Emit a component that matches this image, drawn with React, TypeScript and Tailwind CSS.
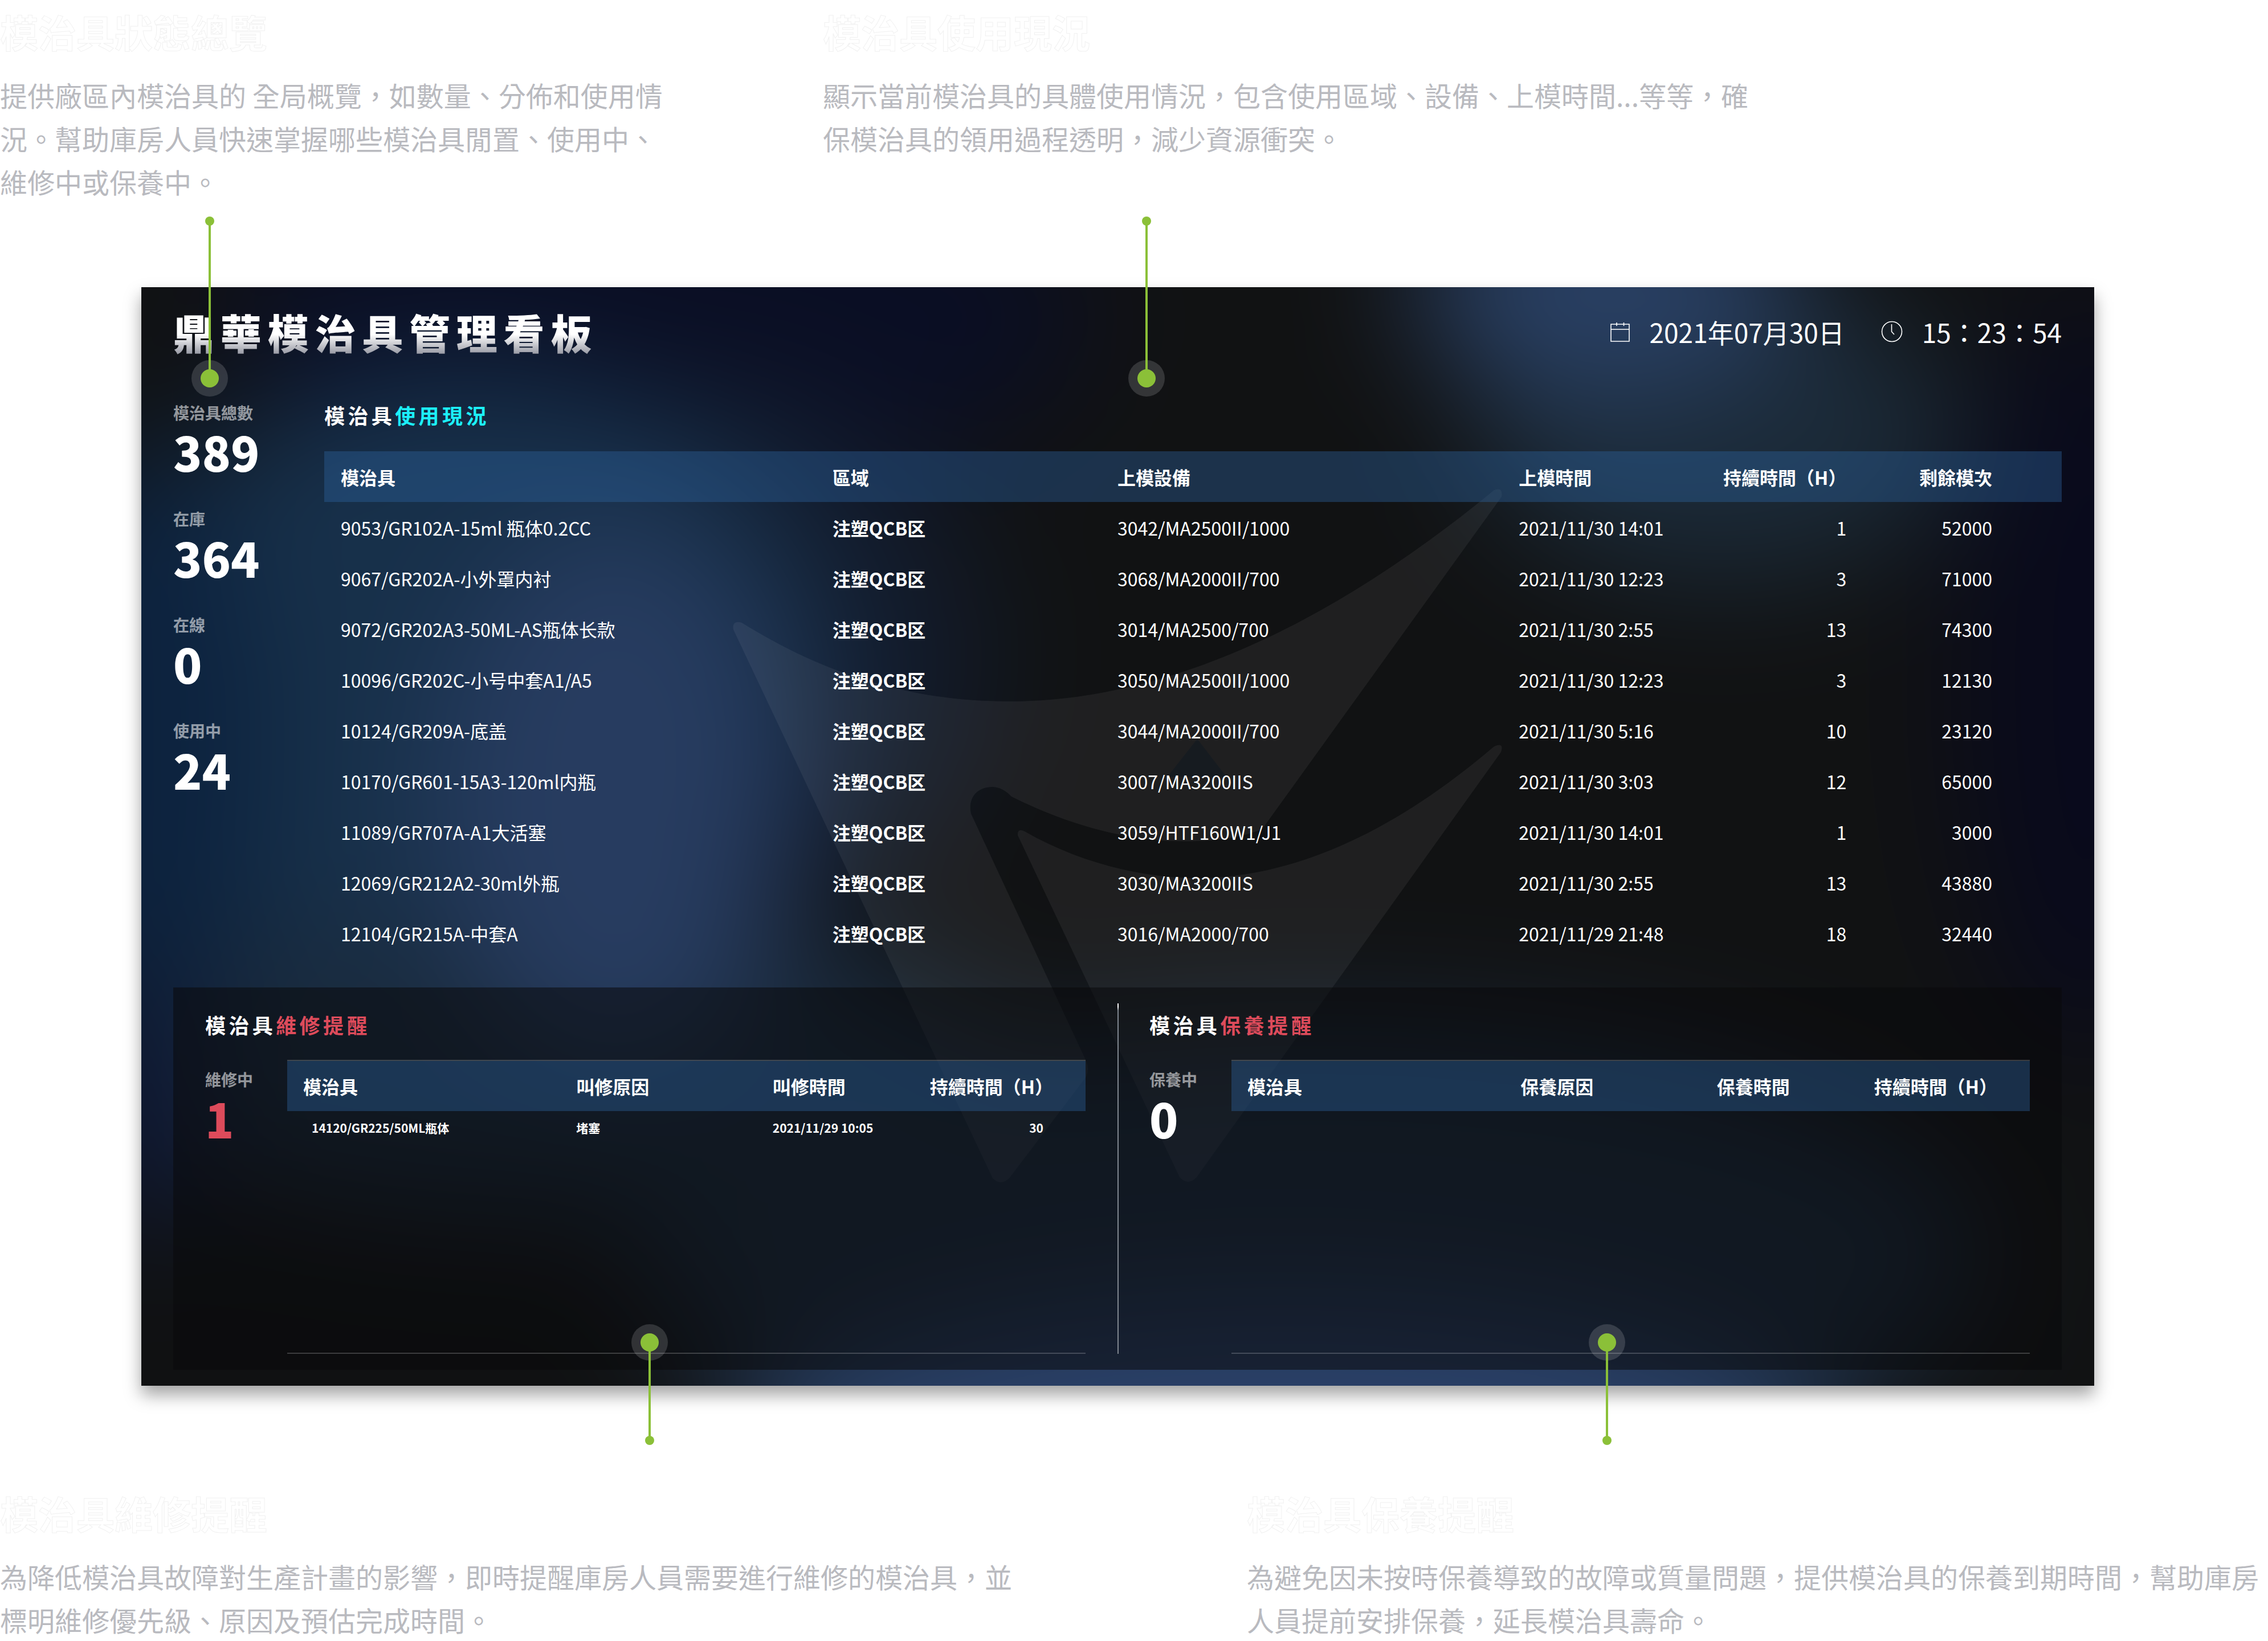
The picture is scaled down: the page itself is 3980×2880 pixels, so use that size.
import type { ReactNode } from "react";

const molds = [
  ["9053/GR102A-15ml 瓶体0.2CC", "3042/MA2500II/1000", "2021/11/30 14:01", "1", "52000"],
  ["9067/GR202A-小外罩内衬", "3068/MA2000II/700", "2021/11/30 12:23", "3", "71000"],
  ["9072/GR202A3-50ML-AS瓶体长款", "3014/MA2500/700", "2021/11/30 2:55", "13", "74300"],
  ["10096/GR202C-小号中套A1/A5", "3050/MA2500II/1000", "2021/11/30 12:23", "3", "12130"],
  ["10124/GR209A-底盖", "3044/MA2000II/700", "2021/11/30 5:16", "10", "23120"],
  ["10170/GR601-15A3-120ml内瓶", "3007/MA3200IIS", "2021/11/30 3:03", "12", "65000"],
  ["11089/GR707A-A1大活塞", "3059/HTF160W1/J1", "2021/11/30 14:01", "1", "3000"],
  ["12069/GR212A2-30ml外瓶", "3030/MA3200IIS", "2021/11/30 2:55", "13", "43880"],
  ["12104/GR215A-中套A", "3016/MA2000/700", "2021/11/29 21:48", "18", "32440"],
];

const repairs = [["14120/GR225/50ML瓶体", "堵塞", "2021/11/29 10:05", "30"]];

const stats = [
  { name: "模治具總數", value: "389" },
  { name: "在庫", value: "364" },
  { name: "在線", value: "0" },
  { name: "使用中", value: "24" },
];

const sectionTitle = "text-[36px] leading-[48px] font-bold tracking-[0.15em] text-white";
const headRow = "bg-[#2c649f]/40 text-left text-[32px] text-white";

function Caption({ title, className, children }: { title: string; className: string; children: ReactNode }) {
  return (
    <div>
      <h2 className="text-[67px] leading-[110px] font-bold text-white [-webkit-text-stroke:1px_#f1f1f1]">
        {title}
      </h2>
      <p className={`mt-[18px] text-[48px] leading-[76px] text-[#b9babf] ${className}`}>{children}</p>
    </div>
  );
}

function Stat({ name, value, alert }: { name: string; value: string; alert?: boolean }) {
  return (
    <dl>
      <dt className="text-[28px] leading-[40px] font-bold text-white/55">{name}</dt>
      <dd className={`text-[83px] leading-[96px] font-black ${alert ? "text-[#dd4b5b]" : "text-white"}`}>
        {value}
      </dd>
    </dl>
  );
}

function PinDown({ className }: { className: string }) {
  return (
    <svg aria-hidden="true" viewBox="0 0 64 316" className={`absolute -top-[124px] h-[316px] w-16 ${className}`}>
      <circle cx="32" cy="284" r="32" fill="#fff" fillOpacity="0.15" />
      <path d="M32 8V284" stroke="#8bc038" strokeWidth="4" />
      <circle cx="32" cy="8" r="8" fill="#8bc038" />
      <circle cx="32" cy="284" r="16" fill="#8bc038" />
    </svg>
  );
}

function PinUp({ className }: { className: string }) {
  return (
    <svg aria-hidden="true" viewBox="0 0 64 212" className={`absolute -bottom-[104px] h-[212px] w-16 ${className}`}>
      <circle cx="32" cy="32" r="32" fill="#fff" fillOpacity="0.15" />
      <path d="M32 32V204" stroke="#8bc038" strokeWidth="4" />
      <circle cx="32" cy="204" r="8" fill="#8bc038" />
      <circle cx="32" cy="32" r="16" fill="#8bc038" />
    </svg>
  );
}

// Soft colour fields with the brand mark over them
function Backdrop() {
  return (
    <svg
      aria-hidden="true"
      viewBox="248 504 3427 1928"
      preserveAspectRatio="none"
      className="absolute inset-0 size-full overflow-hidden"
    >
      <defs>
        <filter
          id="soft"
          filterUnits="userSpaceOnUse"
          x="-400"
          y="-100"
          width="4700"
          height="3200"
          colorInterpolationFilters="sRGB"
        >
          <feGaussianBlur stdDeviation="110" />
        </filter>
      </defs>
      <g filter="url(#soft)">
        <rect x="-400" y="-100" width="4700" height="3200" fill="#111213" />
        <ellipse cx="1150" cy="560" rx="760" ry="300" fill="#0a0e24" />
        <ellipse cx="1250" cy="1150" rx="480" ry="480" fill="#121b2c" />
        <ellipse cx="820" cy="1200" rx="640" ry="560" fill="#17304a" />
        <ellipse cx="960" cy="1880" rx="800" ry="260" fill="#1a2b3e" />
        <ellipse cx="240" cy="1300" rx="210" ry="520" fill="#0c223e" />
        <ellipse cx="1080" cy="1400" rx="310" ry="480" fill="#273c60" />
        <ellipse cx="240" cy="1950" rx="120" ry="220" fill="#0d1634" />
        <ellipse cx="3020" cy="760" rx="430" ry="260" fill="#1b2a38" />
        <ellipse cx="2820" cy="500" rx="340" ry="200" fill="#294064" />
        <ellipse cx="3660" cy="1180" rx="220" ry="680" fill="#090a1c" />
        <ellipse cx="2300" cy="2200" rx="1180" ry="400" fill="#1b2b3e" />
        <ellipse cx="2250" cy="2600" rx="980" ry="330" fill="#2a4068" />
        <ellipse cx="600" cy="2460" rx="560" ry="320" fill="#101112" />
      </g>
      <g fill="#fff" fillOpacity="0.06">
        <path d="M1302 1093C1450 1185 1600 1231 1771 1231C2080 1231 2380 1060 2622 860Q2638 854 2635 872L2215 1455C2170 1474 2110 1478 2052 1476C1950 1470 1860 1440 1775 1398Q1760 1382 1742 1381C1715 1381 1698 1400 1704 1428L1906 1862Q1912 1876 1906 1890L1771 2068Q1756 2082 1742 2068L1287 1105Q1284 1088 1302 1093Z" />
        <path d="M1798 1459C1890 1512 2000 1541 2100 1541C2290 1541 2470 1440 2622 1310Q2640 1302 2634 1320L2100 2066Q2085 2082 2070 2066L1786 1466Q1785 1453 1798 1459Z" />
      </g>
      <path d="M2101 1297L2049 1363H2152Z" fill="#161b20" />
    </svg>
  );
}

type ReminderProps = {
  accent: string;
  stat: ReactNode;
  columns: string[];
  rows: string[][];
};

function Reminder({ accent, stat, columns, rows }: ReminderProps) {
  return (
    <section className="flex flex-col px-[56px] pt-[13px]">
      <h3 className={sectionTitle}>
        模治具<span className="text-[#dd4b5b]">{accent}</span>
      </h3>
      <div className="mt-[38px] flex flex-1">
        <div className="w-[144px] shrink-0 pt-[14px]">{stat}</div>
        <div className="flex-1 border-y-2 border-white/20">
          <table className="w-full table-fixed text-white">
            <colgroup>
              <col className="w-[34.2%]" />
              <col className="w-[24.6%]" />
              <col className="w-[19.6%]" />
              <col className="w-[21.6%]" />
            </colgroup>
            <thead>
              <tr className={`${headRow} h-[88px]`}>
                {columns.map((column, i) => (
                  <th
                    key={column}
                    className={i === 3 ? "pr-[57px] text-right font-bold whitespace-nowrap" : "pl-7 font-bold"}
                  >
                    {column}
                  </th>
                ))}
              </tr>
            </thead>
            <tbody>
              {rows.map((row) => (
                <tr key={row[0]} className="h-[60px] text-[21px] font-bold whitespace-nowrap">
                  <td className="pl-[43px]">{row[0]}</td>
                  <td className="pl-7">{row[1]}</td>
                  <td className="pl-7">{row[2]}</td>
                  <td className="pr-[74px] text-right">{row[3]}</td>
                </tr>
              ))}
            </tbody>
          </table>
        </div>
      </div>
    </section>
  );
}

export default function App() {
  return (
    <main
      lang="zh-Hant"
      className="overflow-hidden bg-white font-['Noto_Sans_CJK_TC','Noto_Sans_CJK_SC',sans-serif]"
    >
      <div className="grid grid-cols-[1444px_1fr]">
        <Caption title="模治具狀態總覽" className="max-w-[1180px]">
          提供廠區內模治具的 全局概覽，如數量、分佈和使用情況。幫助庫房人員快速掌握哪些模治具閒置、使用中、維修中或保養中。
        </Caption>
        <Caption title="模治具使用現況" className="max-w-[1650px]">
          顯示當前模治具的具體使用情況，包含使用區域、設備、上模時間...等等，確保模治具的領用過程透明，減少資源衝突。
        </Caption>
      </div>

      <article className="relative mt-[148px] mr-[305px] ml-[248px] shadow-[0_16px_28px_rgba(0,0,0,0.36)]">
        <Backdrop />
        <div className="relative pt-[30px] pr-[57px] pb-7 pl-[56px]">
          <header className="flex items-center justify-between text-white">
            <h1 className="bg-linear-to-b from-white from-55% to-[#9a9ca6] to-90% bg-clip-text text-[72px] leading-[96px] font-black tracking-[0.15em] text-transparent">
              鼎華模治具管理看板
            </h1>
            <div className="flex items-center text-[46px] leading-[64px]">
              <svg aria-hidden="true" viewBox="0 0 36 36" className="mr-[34px] size-9" fill="none" stroke="#fff" strokeWidth="1.6">
                <path d="M2 5H34V35H2ZM2 14H34M12 2V8M24.500 2V8" />
              </svg>
              <time dateTime="2021-07-30">2021年07月30日</time>
              <svg aria-hidden="true" viewBox="0 0 38 38" className="mr-[34px] ml-16 size-[38px]" fill="none" stroke="#fff" strokeWidth="1.6">
                <circle cx="19" cy="19" r="17.500" />
                <path d="M18.500 6V19L23 24" />
              </svg>
              <time dateTime="15:23:54">15：23：54</time>
            </div>
          </header>

          <div className="mt-[74px] flex">
            <aside className="flex w-[265px] shrink-0 flex-col gap-[50px]">
              {stats.map((stat) => (
                <Stat key={stat.name} {...stat} />
              ))}
            </aside>
            <section className="flex-1">
              <h2 className={sectionTitle}>
                模治具<span className="text-[#1cf0fa]">使用現況</span>
              </h2>
              <table className="mt-10 w-full table-fixed text-[32px] text-white">
                <colgroup>
                  <col className="w-[28.3%]" />
                  <col className="w-[16.4%]" />
                  <col className="w-[23.1%]" />
                  <col className="w-[11.7%]" />
                  <col className="w-[9%]" />
                  <col className="w-[11.5%]" />
                </colgroup>
                <thead>
                  <tr className={`${headRow} h-[89px] whitespace-nowrap`}>
                    <th className="pl-[29px] font-bold">模治具</th>
                    <th className="pl-[29px] font-bold">區域</th>
                    <th className="pl-[29px] font-bold">上模設備</th>
                    <th className="pl-[29px] font-bold">上模時間</th>
                    <th className="pr-[27px] text-right font-bold">持續時間（H）</th>
                    <th className="pr-[122px] text-right font-bold">剩餘模次</th>
                  </tr>
                </thead>
                <tbody>
                  {molds.map(([mold, machine, time, hours, left]) => (
                    <tr key={mold} className="h-[89px] whitespace-nowrap">
                      <td className="pl-[29px]">{mold}</td>
                      <td className="pl-[29px] font-bold">注塑QCB区</td>
                      <td className="pl-[29px]">{machine}</td>
                      <td className="pl-[29px]">{time}</td>
                      <td className="pr-[27px] text-right">{hours}</td>
                      <td className="pr-[122px] text-right">{left}</td>
                    </tr>
                  ))}
                </tbody>
              </table>
            </section>
          </div>

          <div className="relative mt-[51px] grid min-h-[671px] grid-cols-2 bg-[#09090b]/55 py-7">
            <Reminder
              accent="維修提醒"
              stat={<Stat name="維修中" value="1" alert />}
              columns={["模治具", "叫修原因", "叫修時間", "持續時間（H）"]}
              rows={repairs}
            />
            <Reminder
              accent="保養提醒"
              stat={<Stat name="保養中" value="0" />}
              columns={["模治具", "保養原因", "保養時間", "持續時間（H）"]}
              rows={[]}
            />
            <div className="absolute inset-y-7 left-1/2 w-[2px] bg-linear-to-b from-white from-1% via-[#7f868f] via-2% to-[#7f868f]" />
          </div>
        </div>

        <PinDown className="left-[88px]" />
        <PinDown className="left-[1732px]" />
        <PinUp className="left-[860px]" />
        <PinUp className="left-[2540px]" />
      </article>

      <div className="mt-[168px] grid grid-cols-[2188px_1fr]">
        <Caption title="模治具維修提醒" className="max-w-[1790px]">
          為降低模治具故障對生產計畫的影響，即時提醒庫房人員需要進行維修的模治具，並標明維修優先級、原因及預估完成時間。
        </Caption>
        <Caption title="模治具保養提醒" className="max-w-[1790px]">
          為避免因未按時保養導致的故障或質量問題，提供模治具的保養到期時間，幫助庫房人員提前安排保養，延長模治具壽命。
        </Caption>
      </div>
    </main>
  );
}
